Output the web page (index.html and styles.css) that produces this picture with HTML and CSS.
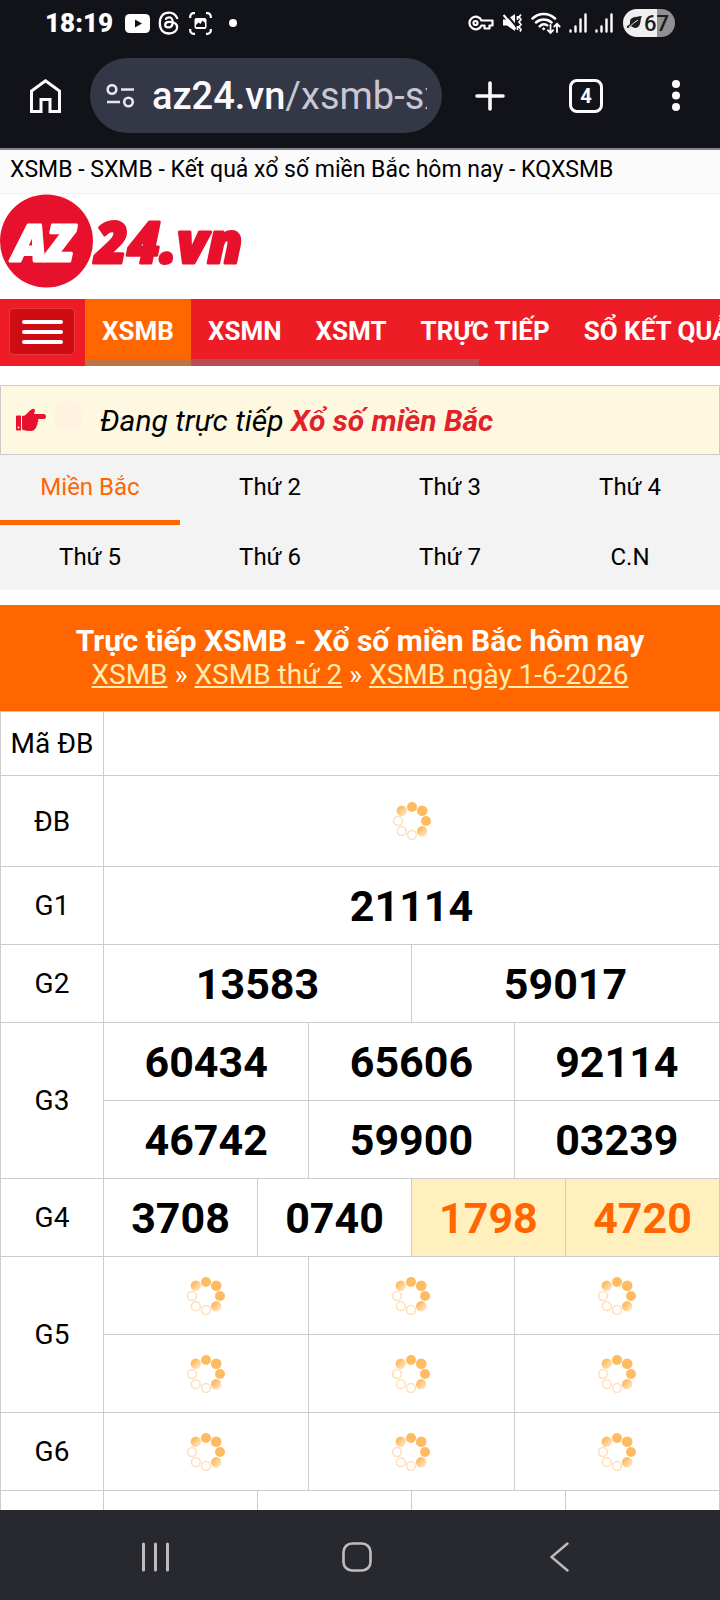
FILE: index.html
```
<!DOCTYPE html>
<html lang="vi">
<head>
  <meta charset="UTF-8">
  <meta name="viewport" content="width=device-width, initial-scale=1.0">
  <title>XSMB - SXMB - Kết quả xổ số miền Bắc hôm nay - KQXSMB</title>
  <link rel="stylesheet" href="styles.css">
</head>
<body>
  <svg class="defs" width="0" height="0">
    <defs>
      <linearGradient id="fade1" x1="0" y1="0" x2="1" y2="1">
        <stop offset="0.3" stop-color="#ffbe68"/>
        <stop offset="1" stop-color="#fff0dc"/>
      </linearGradient>
      <symbol id="loading" viewBox="0 0 38 38">
        <g fill="#ffbb62">
          <circle cx="19" cy="5" r="5"/>
          <circle cx="29.2" cy="8.8" r="5.3"/>
          <circle cx="33" cy="19" r="5"/>
        </g>
        <circle cx="8.8" cy="8.8" r="5.2" fill="url(#fade1)"/>
        <circle cx="29.2" cy="29.2" r="5.2" fill="url(#fade1)"/>
        <g fill="none" stroke="#ffdfba" stroke-width="1.5">
          <circle cx="19" cy="33" r="4.4"/>
          <circle cx="8.8" cy="29.2" r="4.4"/>
          <circle cx="5" cy="19" r="4.4"/>
        </g>
      </symbol>
      <symbol id="signal" viewBox="0 0 18 20">
        <path d="M1.500 17.500v1M6.500 13.500v5M11.500 6.500v12M16.500 1.500v17" fill="none" stroke="#fff" stroke-width="2.400" stroke-linecap="round"/>
      </symbol>
    </defs>
  </svg>

  <!-- phone status bar -->
  <div class="status">
    <span class="clock">18:19</span>
    <svg class="st-yt" width="25" height="19" viewBox="0 0 25 19">
      <rect width="25" height="19" rx="4.500" fill="#fff"/>
      <path d="M10 5.500v8l7-4z" fill="#121318"/>
    </svg>
    <svg class="st-th" width="24" height="26" viewBox="1 0 22 24">
      <path d="M19.500 7.500c-1.300-3-3.700-5-7.500-5c-5 0-8.500 3-8.500 9.500s3.500 9.700 8.500 9.700c4.500 0 7.500-2.700 7.500-5.500s-1.500-5.200-7.300-5.200c-2.700 0-3.700 1.250-3.700 2.600c0 1.500 1.300 2.500 2.900 2.500c2.600 0 4-1.500 4-5s-2-4.200-3.200-4.200s-2.300.400-3 1.300" fill="none" stroke="#fff" stroke-width="2.100" stroke-linecap="round"/>
    </svg>
    <svg class="st-cap" width="23" height="23" viewBox="0 0 23 23">
      <path d="M1.200 6V4.500a3.300 3.300 0 0 1 3.300-3.300H6M17 1.200h1.500a3.300 3.300 0 0 1 3.300 3.300V6M21.800 17v1.500a3.300 3.300 0 0 1-3.300 3.300H17M6 21.800H4.500a3.300 3.300 0 0 1-3.300-3.300V17" fill="none" stroke="#fff" stroke-width="2.200"/>
      <rect x="5.500" y="6" width="12" height="11" rx="2" fill="#fff"/>
      <path d="M7 15v-2l2.500-2.500 2 1.500 2-3.500 2.500 2.500v4z" fill="#121318"/>
    </svg>
    <svg class="st-dot" width="8" height="8" viewBox="0 0 8 8"><circle cx="4" cy="4" r="4" fill="#fff"/></svg>
    <div class="st-right">
      <svg width="26" height="16" viewBox="0 0 26 16" fill="none" stroke="#fff" stroke-width="2.200" stroke-linejoin="round">
        <path d="M13.500 5.500A6.300 6.300 0 1 0 13.500 10.500H16.500V13.500H21.500V10.500H24.500V5.500Z"/>
        <circle cx="7.500" cy="8" r="2"/>
      </svg>
      <svg width="21" height="20" viewBox="0 0 21 20">
        <path d="M1 6.500h4L13 1v17l-8-5.500H1z" fill="#fff"/>
        <path d="M3 0l12 14" stroke="#121318" stroke-width="2"/>
        <path d="M1.500 2l12 14" stroke="#fff" stroke-width="2"/>
        <path d="M19 1.500l-2 2.500 2 2.500-2 2.500 2 2.500-2 2.500 2 2.500-1 2M15.500 3v4M15.500 13v4" fill="none" stroke="#fff" stroke-width="1.700"/>
      </svg>
      <svg width="30" height="24" viewBox="0 0 30 24" fill="none" stroke="#fff" stroke-width="2.500" stroke-linecap="round">
        <path d="M1.500 7.500a16 16 0 0 1 22.500 0M5 11.500a11.500 11.500 0 0 1 15.500 0M8.700 15.300a6 6 0 0 1 7.500-1"/>
        <circle cx="12.600" cy="17.800" r="1" fill="#fff" stroke-width="1"/>
        <path d="M19.500 14v7.500M16.800 19.200l2.700 2.700 2.700-2.700M26 21v-7.500M23.300 15.500L26 12.800l2.700 2.700" stroke-width="1.800"/>
      </svg>
      <svg width="18" height="20"><use href="#signal"/></svg>
      <svg width="18" height="20"><use href="#signal"/></svg>
      <span class="battery">
        <svg width="15" height="14" viewBox="0 0 15 14"><path d="M15 0C8 1 3 1 3 6c0 2 0 3-3 4v2c2 0 3-1 4-2 2 2 6 3 8 0 2-2 1-7 3-10z" fill="#1c1c1e"/><path d="M2 11C5 9 6 7 11 4" stroke="#efefef" fill="none"/></svg>
        67
      </span>
    </div>
  </div>

  <!-- browser toolbar -->
  <div class="toolbar">
    <button class="tool home" aria-label="Home">
      <svg width="31" height="34" viewBox="0 0 31 34" fill="none" stroke="#fdfaff" stroke-width="3"><path d="M1.500 32.500V12L15.500 1.800 29.500 12V32.500H20V20.500H11V32.500Z"/></svg>
    </button>
    <button class="address">
      <svg width="29" height="24" viewBox="0 0 29 24" fill="none" stroke="#e6e5f0" stroke-width="2.600"><circle cx="6" cy="5.500" r="4.300"/><path d="M15 5.500H28M1 18H14"/><circle cx="22.500" cy="18" r="4.300"/></svg>
      <span class="url"><span class="host">az24.vn</span>/xsmb-sxmb</span>
    </button>
    <button class="tool" aria-label="New tab">
      <svg width="30" height="30" viewBox="0 0 30 30" stroke="#fdfaff" stroke-width="3.600" stroke-linecap="round"><path d="M15 2v26M2 15h26"/></svg>
    </button>
    <button class="tool"><span class="tab-count">4</span></button>
    <button class="tool more" aria-label="Menu">
      <svg width="8" height="31" viewBox="0 0 8 31" fill="#fdfaff"><circle cx="4" cy="4" r="4"/><circle cx="4" cy="15.500" r="4"/><circle cx="4" cy="27" r="4"/></svg>
    </button>
  </div>

  <div class="page">
    <h1 class="page-title">XSMB - SXMB - Kết quả xổ số miền Bắc hôm nay - KQXSMB</h1>

    <a class="logo" href="#">
      <svg width="250" height="94" viewBox="0 0 250 94">
        <circle cx="46.500" cy="47" r="46.500" fill="#e8112d"/>
        <text class="logo-az" x="13" y="67">AZ</text>
        <text class="logo-vn" x="95" y="69">24.vn</text>
      </svg>
    </a>

    <nav class="menu">
      <button class="burger" aria-label="Danh mục"><span></span><span></span><span></span></button>
      <div class="menu-scroll">
        <a class="active" href="#">XSMB</a>
        <a href="#">XSMN</a>
        <a href="#">XSMT</a>
        <a href="#">TRỰC TIẾP</a>
        <a href="#">SỔ KẾT QUẢ</a>
      </div>
    </nav>

    <div class="live">
      <svg width="30" height="24" viewBox="0 0 30 24">
        <path d="M0 8.500q0-1 1-1h4v15H1q-1 0-1-1zM6 8q3 0 5-2.500Q13 3 16 1q3-1 3 2l-1 3h10q2 0 2 2.500T28 11h-6q1 2-.5 3.500.5 2-1 3.500 0 2-1.500 3-1 2-4 2-5 0-9-1.500z" fill="#e8112d"/>
        <circle cx="2.500" cy="19.500" r="1" fill="#fff8e1"/>
      </svg>
      <span class="pulse"></span>
      <em>Đang trực tiếp <a href="#">Xổ số miền Bắc</a></em>
    </div>

    <div class="days">
      <a class="active" href="#">Miền Bắc</a>
      <a href="#">Thứ 2</a>
      <a href="#">Thứ 3</a>
      <a href="#">Thứ 4</a>
      <a href="#">Thứ 5</a>
      <a href="#">Thứ 6</a>
      <a href="#">Thứ 7</a>
      <a href="#">C.N</a>
    </div>

    <div class="heading">
      <h2>Trực tiếp XSMB - Xổ số miền Bắc hôm nay</h2>
      <div><a href="#">XSMB</a> » <a href="#">XSMB thứ 2</a> » <a href="#">XSMB ngày 1-6-2026</a></div>
    </div>

    <table class="result">
      <colgroup>
        <col class="label-col">
        <col span="12">
      </colgroup>
      <tr class="code"><th>Mã ĐB</th><td colspan="12"></td></tr>
      <tr class="special"><th>ĐB</th><td colspan="12"><svg class="spin"><use href="#loading"/></svg></td></tr>
      <tr><th>G1</th><td colspan="12">21114</td></tr>
      <tr><th>G2</th><td colspan="6">13583</td><td colspan="6">59017</td></tr>
      <tr><th rowspan="2">G3</th><td colspan="4">60434</td><td colspan="4">65606</td><td colspan="4">92114</td></tr>
      <tr><td colspan="4">46742</td><td colspan="4">59900</td><td colspan="4">03239</td></tr>
      <tr><th>G4</th><td colspan="3">3708</td><td colspan="3">0740</td><td class="new" colspan="3">1798</td><td class="new" colspan="3">4720</td></tr>
      <tr>
        <th rowspan="2">G5</th>
        <td colspan="4"><svg class="spin"><use href="#loading"/></svg></td>
        <td colspan="4"><svg class="spin"><use href="#loading"/></svg></td>
        <td colspan="4"><svg class="spin"><use href="#loading"/></svg></td>
      </tr>
      <tr>
        <td colspan="4"><svg class="spin"><use href="#loading"/></svg></td>
        <td colspan="4"><svg class="spin"><use href="#loading"/></svg></td>
        <td colspan="4"><svg class="spin"><use href="#loading"/></svg></td>
      </tr>
      <tr>
        <th>G6</th>
        <td colspan="4"><svg class="spin"><use href="#loading"/></svg></td>
        <td colspan="4"><svg class="spin"><use href="#loading"/></svg></td>
        <td colspan="4"><svg class="spin"><use href="#loading"/></svg></td>
      </tr>
      <tr><th></th><td colspan="3"></td><td colspan="3"></td><td colspan="3"></td><td colspan="3"></td></tr>
    </table>
  </div>

  <!-- phone navigation -->
  <div class="softkeys">
    <button aria-label="Recents"><svg width="27" height="30" viewBox="0 0 27 30" stroke="#bdbdc0" stroke-width="3" stroke-linecap="round"><path d="M1.500 2v26M13.500 2v26M25.500 2v26"/></svg></button>
    <button aria-label="Home"><svg width="30" height="30" viewBox="0 0 30 30" fill="none" stroke="#bdbdc0" stroke-width="2.600"><rect x="1.500" y="1.500" width="27" height="27" rx="8.500"/></svg></button>
    <button aria-label="Back"><svg width="19" height="30" viewBox="0 0 19 30" fill="none" stroke="#bdbdc0" stroke-width="2.400" stroke-linecap="round"><path d="M17.500 1.500L1.500 15l16 13.500"/></svg></button>
  </div>
</body>
</html>
```
FILE: styles.css
```
* {
  box-sizing: border-box;
}

body {
  margin: 0;
  height: 100vh;
  display: flex;
  flex-direction: column;
  overflow: hidden;
  font-family: Roboto, "Liberation Sans", sans-serif;
  color: #000;
  background: #fff;
}

a {
  color: inherit;
  text-decoration: none;
}

button {
  border: 0;
  padding: 0;
  background: none;
  font-family: inherit;
}

svg {
  display: block;
  flex: none;
}

.defs {
  position: absolute;
}

/* status bar */
.status {
  display: flex;
  align-items: center;
  height: 46px;
  padding: 0 45px;
  color: #fff;
  background: #121318;
}

.clock {
  width: 80px;
  font-size: 26px;
  font-weight: 900;
}

.st-th { margin-left: 7px; }
.st-cap { margin-left: 8px; }
.st-dot { margin-left: 17px; }

.st-right {
  display: flex;
  align-items: center;
  gap: 8px;
  margin-left: auto;
}

.battery {
  display: flex;
  align-items: center;
  gap: 2px;
  width: 52px;
  height: 28px;
  margin-left: 2px;
  padding-left: 4px;
  border-radius: 14px;
  font-size: 22px;
  font-weight: 500;
  color: #1c1c1e;
  background: linear-gradient(90deg, #efefef 66%, #909092 66%);
}

/* toolbar */
.toolbar {
  display: flex;
  align-items: center;
  height: 104px;
  padding: 0 0 3px;
  border-bottom: 2px solid #85868c;
  background: #121318;
}

.tool {
  display: flex;
  justify-content: center;
  align-items: center;
  width: 96px;
  height: 75px;
}

.home {
  width: 90px;
}

.more {
  width: 86px;
  padding-right: 3px;
}

.address {
  display: flex;
  align-items: center;
  flex: 1;
  min-width: 0;
  height: 75px;
  padding: 0 15px 0 16px;
  border-radius: 38px;
  background: #343746;
}

.url {
  flex: 1;
  margin-left: 17px;
  overflow: hidden;
  white-space: nowrap;
  text-align: left;
  font-size: 38px;
  line-height: 50px;
  color: #c7c8d4;
}

.host {
  font-weight: 500;
  color: #fdfaff;
}

.tab-count {
  width: 34px;
  height: 34px;
  border: 3px solid #fdfaff;
  border-radius: 8px;
  font-size: 20px;
  line-height: 28px;
  font-weight: 700;
  color: #fdfaff;
}

/* web page */
.page {
  flex: 1;
  min-height: 0;
  overflow: hidden;
}

.page-title {
  margin: 0;
  padding: 7px 10px 10px;
  border-bottom: 1px solid #f2f2f2;
  font-size: 23px;
  line-height: 26px;
  font-weight: 400;
  background: #fbfbfb;
}

.logo {
  display: block;
  padding-bottom: 11px;
}

.logo-az,
.logo-vn {
  font-family: "Noto Sans", sans-serif;
  font-weight: 900;
  font-style: italic;
  stroke-linejoin: round;
}

.logo-az {
  font-size: 50px;
  fill: #fff;
  stroke: #fff;
  stroke-width: 3px;
}

.logo-vn {
  font-size: 56px;
  fill: #e8112d;
  stroke: #e8112d;
  stroke-width: 3px;
}

.menu {
  display: flex;
  height: 67px;
  color: #fff;
  background: #ee1c25;
}

.burger {
  display: flex;
  flex: none;
  flex-direction: column;
  justify-content: center;
  align-items: center;
  gap: 6px;
  width: 66px;
  height: 47px;
  margin: 9px 10px 0 9px;
  border: 1px solid #e5383f;
  border-radius: 5px;
  background: #cd0c14;
}

.burger span {
  width: 41px;
  height: 4px;
  border-radius: 2px;
  background: #fff;
}

.menu-scroll {
  position: relative;
  display: flex;
  flex: 1;
  overflow: hidden;
  white-space: nowrap;
  font-size: 26px;
  line-height: 64px;
  font-weight: 700;
}

.menu-scroll a {
  padding: 0 17px;
}

.menu-scroll .active {
  background: #f60;
}

/* scroll thumb under the menu */
.menu-scroll::after {
  content: "";
  position: absolute;
  left: 0;
  bottom: 0;
  width: 62%;
  height: 7px;
  background: rgba(128, 128, 128, 0.5);
}

.live {
  display: flex;
  align-items: center;
  height: 70px;
  margin-top: 19px;
  padding: 0 15px;
  border: 1px solid #ccc;
  font-size: 30px;
  background: #fff8e1;
}

.pulse {
  width: 30px;
  height: 30px;
  margin: 0 17px 8px 7px;
  border-radius: 50%;
  background: #fff3e0;
}

.live a {
  font-weight: 700;
  color: #e1222a;
}

.days {
  display: grid;
  grid-template-columns: repeat(4, 1fr);
  text-align: center;
  font-size: 24px;
  line-height: 65px;
  background: #f3f3f3;
}

.days .active {
  border-bottom: 5px solid #f60;
  color: #f60;
}

.heading {
  margin-top: 15px;
  padding: 19px 0;
  text-align: center;
  font-size: 28px;
  line-height: 34px;
  color: #fff;
  background: #f60;
}

.heading h2 {
  margin: 0;
  font-size: 30px;
  font-weight: 700;
}

.heading a {
  text-decoration: underline;
  color: #ffecb3;
}

.result {
  width: 100%;
  table-layout: fixed;
  border-collapse: collapse;
  text-align: center;
}

.label-col {
  width: 103px;
}

.result th,
.result td {
  height: 78px;
  padding: 0;
  border: 1px solid #ccc;
  font-size: 43px;
  font-weight: 700;
}

.result th {
  font-size: 28px;
  font-weight: 400;
}

.result .code th {
  height: 64px;
}

.result .special th {
  height: 91px;
}

.result .code td,
.result .special td {
  height: auto;
}

.result .new {
  color: #f60;
  background: #fff0bd;
}

.spin {
  width: 38px;
  height: 38px;
  margin: 0 auto;
}

.softkeys {
  display: flex;
  justify-content: center;
  height: 90px;
  padding: 4px 6px 0 0;
  background: #28292e;
}

.softkeys button {
  display: flex;
  justify-content: center;
  align-items: center;
  width: 202px;
}
```
